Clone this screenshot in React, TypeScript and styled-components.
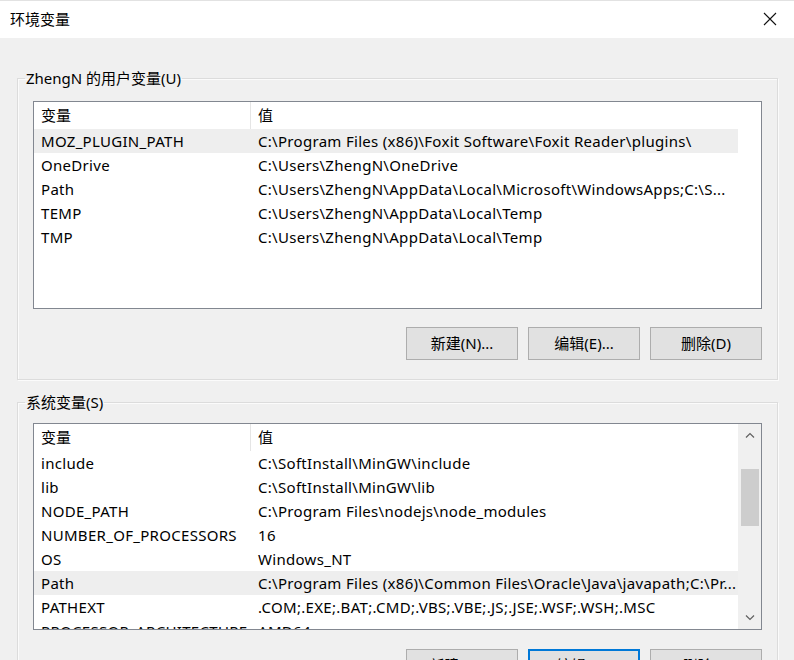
import React from "react";
import styled, { createGlobalStyle } from "styled-components";

const FONT = `"Noto Sans", "Noto Sans CJK SC", sans-serif`;

const Global = createGlobalStyle`
  html, body { margin: 0; padding: 0; background: #f0f0f0; }
  * { box-sizing: border-box; }
`;

const Window = styled.div`
  width: 794px;
  height: 660px;
  overflow: hidden;
  background: #f0f0f0;
  border-top: 1px solid #e2e2e2;
  display: flex;
  flex-direction: column;
  font-family: ${FONT};
  font-size: 15px;
  color: #000;
`;

const TitleBar = styled.div`
  height: 37px;
  flex: none;
  background: #fff;
  display: flex;
  align-items: center;
  justify-content: space-between;
  padding: 0 17px 2px 10px;
  font-size: 15px;
`;

const Title = styled.span`
  line-height: 20px;
`;

const Body = styled.div`
  padding: 30px 16px 0 17px;
  display: flex;
  flex-direction: column;
  gap: 12px;
`;

const Group = styled.fieldset`
  margin: 0;
  min-width: 0;
  padding: 0 15px 19px;
  border: 1px solid #dcdcdc;
  box-shadow: inset 1px 1px 0 #fbfbfb, 1px 1px 0 #fbfbfb;
`;

const Legend = styled.legend`
  margin-left: -8px;
  padding: 0 1px;
  font-size: 15px;
  line-height: 20px;
`;

const ListView = styled.div<{ $top: number; $h: number }>`
  margin-top: ${(p) => p.$top}px;
  height: ${(p) => p.$h}px;
  border: 1px solid #828790;
  background: #fff;
  display: flex;
  overflow: hidden;
`;

const ListMain = styled.div`
  width: 704px;
  flex: none;
  display: flex;
  flex-direction: column;
`;

const HeaderRow = styled.div<{ $h: number }>`
  display: grid;
  grid-template-columns: 217px 1fr;
  height: ${(p) => p.$h}px;
  flex: none;
`;

const HeaderCell = styled.div<{ $divider?: boolean }>`
  display: flex;
  align-items: center;
  padding-left: 7px;
  padding-bottom: 1px;
  border-right: ${(p) => (p.$divider ? "1px solid #e5e5e5" : "none")};
  line-height: 20px;
`;

const Row = styled.div<{ $sel?: boolean }>`
  display: grid;
  grid-template-columns: 217px 1fr;
  height: 24px;
  flex: none;
  background: ${(p) => (p.$sel ? "#eeeeee" : "transparent")};
`;

const Cell = styled.div`
  display: flex;
  align-items: center;
  padding-left: 7px;
  padding-bottom: 1px;
  white-space: nowrap;
  overflow: hidden;
  line-height: 20px;
  letter-spacing: 0.3px;
`;

const ScrollBar = styled.div`
  flex: 1;
  background: #f0f0f0;
  display: flex;
  flex-direction: column;
  align-items: center;
`;

const ArrowBtn = styled.div`
  height: 22px;
  width: 100%;
  display: flex;
  align-items: center;
  justify-content: center;
  flex: none;
`;

const Track = styled.div`
  flex: 1;
  width: 100%;
  display: flex;
  flex-direction: column;
  align-items: center;
`;

const Thumb = styled.div<{ $top: number; $h: number }>`
  margin-top: ${(p) => p.$top}px;
  height: ${(p) => p.$h}px;
  width: 18px;
  background: #cdcdcd;
`;

const ButtonRow = styled.div<{ $top: number }>`
  margin-top: ${(p) => p.$top}px;
  display: flex;
  justify-content: flex-end;
  gap: 10px;
`;

const Btn = styled.button<{ $focused?: boolean }>`
  width: 112px;
  height: 33px;
  padding: 0 0 2px;
  background: #e1e1e1;
  border: ${(p) => (p.$focused ? "2px solid #0078d7" : "1px solid #adadad")};
  font-family: ${FONT};
  font-size: 15px;
  color: #000;
  line-height: 20px;
`;

const Chevron = ({ up }: { up?: boolean }) => (
  <svg width="10" height="6" viewBox="0 0 10 6">
    <polyline
      points={up ? "1,5.5 5,1.5 9,5.5" : "1,0.5 5,4.5 9,0.5"}
      fill="none"
      stroke="#606060"
      strokeWidth="1.2"
    />
  </svg>
);

const CloseIcon = () => (
  <svg width="14" height="14" viewBox="0 0 14 14">
    <path d="M1 1 L13 13 M13 1 L1 13" stroke="#111" strokeWidth="1.1" />
  </svg>
);

type Item = [string, string, boolean?];

const userVars: Item[] = [
  ["MOZ_PLUGIN_PATH", "C:\\Program Files (x86)\\Foxit Software\\Foxit Reader\\plugins\\", true],
  ["OneDrive", "C:\\Users\\ZhengN\\OneDrive"],
  ["Path", "C:\\Users\\ZhengN\\AppData\\Local\\Microsoft\\WindowsApps;C:\\S..."],
  ["TEMP", "C:\\Users\\ZhengN\\AppData\\Local\\Temp"],
  ["TMP", "C:\\Users\\ZhengN\\AppData\\Local\\Temp"],
];

const sysVars: Item[] = [
  ["include", "C:\\SoftInstall\\MinGW\\include"],
  ["lib", "C:\\SoftInstall\\MinGW\\lib"],
  ["NODE_PATH", "C:\\Program Files\\nodejs\\node_modules"],
  ["NUMBER_OF_PROCESSORS", "16"],
  ["OS", "Windows_NT"],
  ["Path", "C:\\Program Files (x86)\\Common Files\\Oracle\\Java\\javapath;C:\\Pr...", true],
  ["PATHEXT", ".COM;.EXE;.BAT;.CMD;.VBS;.VBE;.JS;.JSE;.WSF;.WSH;.MSC"],
  ["PROCESSOR_ARCHITECTURE", "AMD64"],
];

const Rows = ({ items }: { items: Item[] }) => (
  <>
    {items.map(([k, v, sel]) => (
      <Row key={k + v} $sel={sel}>
        <Cell>{k}</Cell>
        <Cell>{v}</Cell>
      </Row>
    ))}
  </>
);

export default function App() {
  return (
    <>
      <Global />
      <Window>
        <TitleBar>
          <Title>环境变量</Title>
          <CloseIcon />
        </TitleBar>
        <Body>
          <Group>
            <Legend>ZhengN 的用户变量(U)</Legend>
            <ListView $top={13} $h={208}>
              <ListMain>
                <HeaderRow $h={27}>
                  <HeaderCell $divider>变量</HeaderCell>
                  <HeaderCell>值</HeaderCell>
                </HeaderRow>
                <Rows items={userVars} />
              </ListMain>
            </ListView>
            <ButtonRow $top={18}>
              <Btn>新建(N)...</Btn>
              <Btn>编辑(E)...</Btn>
              <Btn>删除(D)</Btn>
            </ButtonRow>
          </Group>
          <Group>
            <Legend>系统变量(S)</Legend>
            <ListView $top={11} $h={207}>
              <ListMain>
                <HeaderRow $h={27}>
                  <HeaderCell $divider>变量</HeaderCell>
                  <HeaderCell>值</HeaderCell>
                </HeaderRow>
                <Rows items={sysVars} />
              </ListMain>
              <ScrollBar>
                <ArrowBtn>
                  <Chevron up />
                </ArrowBtn>
                <Track>
                  <Thumb $top={23} $h={57} />
                </Track>
                <ArrowBtn>
                  <Chevron />
                </ArrowBtn>
              </ScrollBar>
            </ListView>
            <ButtonRow $top={19}>
              <Btn>新建(W)...</Btn>
              <Btn $focused>编辑(I)...</Btn>
              <Btn>删除(L)</Btn>
            </ButtonRow>
          </Group>
        </Body>
      </Window>
    </>
  );
}
